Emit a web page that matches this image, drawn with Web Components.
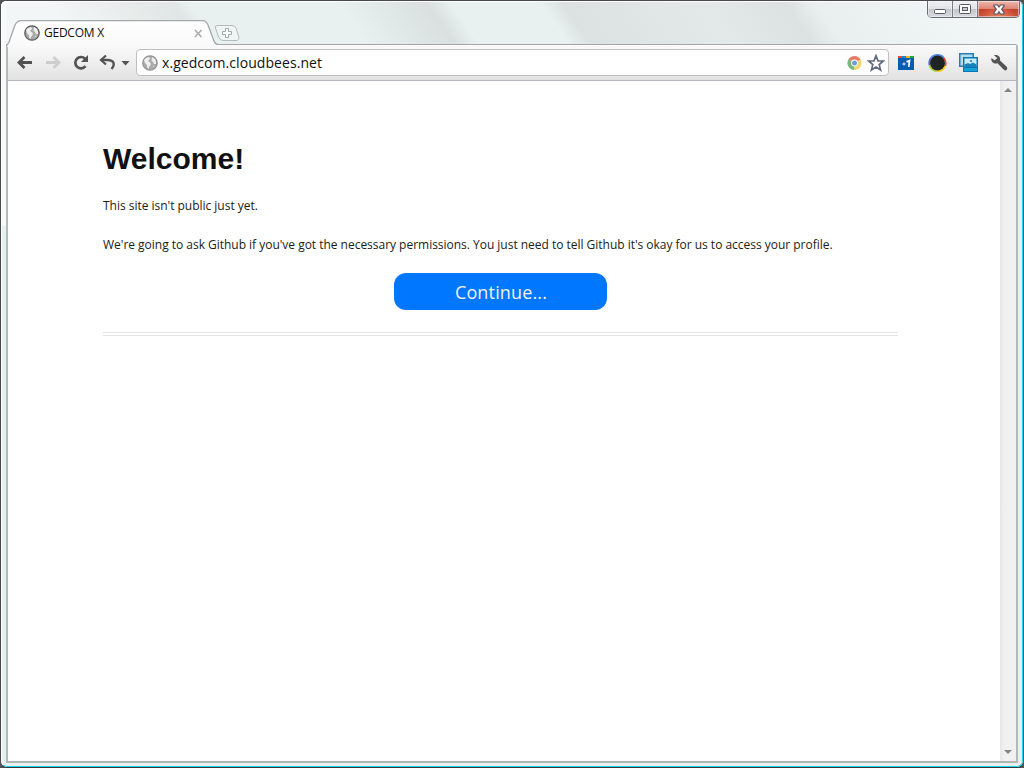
<!DOCTYPE html>
<html lang="en">
<meta charset="UTF-8">
<title>GEDCOM X</title>
<style>
  html, body {
    margin: 0;
    height: 100%;
    overflow: hidden;
    background: #515356;
  }
  body {
    font-family: "Open Sans", "Noto Sans", sans-serif;
  }
</style>

<template id="window-template">
  <style>
    :host {
      display: flex;
      flex-direction: column;
      box-sizing: border-box;
      width: 1024px;
      height: 768px;
      border: 1px solid #48494c;
      border-bottom-color: #35393b;
      border-radius: 6px 6px 7px 7px;
      background: #eef3f3;
      overflow: hidden;
    }
    .glass {
      display: flex;
      flex-direction: column;
      flex: 1;
      box-sizing: border-box;
      border: 1px solid #fcfefe;
      border-right: 1px solid #18d4ed;
      border-bottom: 1px solid #18d4ed;
      border-radius: 5px 5px 6px 6px;
      padding: 0 4px 3px 4px;
      background:
        linear-gradient(#f8faf9 0 223px, transparent 224px) 0 0 / 5px 100% no-repeat,
        linear-gradient(55.7deg, #f3f6f6 0 100px, #e0e6e5 202px, #e9f0f0 216px, #e8f1f0 340px, #d9e0df 412px, #e8f1f0 432px, #e8f1f0 507px, #dbe2e1 525px, #e3e9e8 640px, #dbe2e1 708px, #e9efef 732px, #f3f7f7 880px) 0 0 / 1020px 110px no-repeat,
        #e9f0f0;
    }
    .top {
      display: flex;
      justify-content: space-between;
      height: 42px;
    }
    .frame {
      flex: 1;
      display: flex;
      flex-direction: column;
      min-height: 0;
      border: 1px solid #a0a5a5;
      border-width: 0 2px 2px;
      border-right-color: #b3b8b8;
      border-bottom-color: #b0b5b5;
      border-left-color: #b3b8b8;
      border-radius: 0 3px 0 0;
      background: #fff;
    }
  </style>
  <div class="glass">
    <div class="top"><slot name="tabs"></slot><slot name="controls"></slot></div>
    <div class="frame"><slot></slot></div>
  </div>
</template>

<template id="tab-template">
  <style>
    :host { display: flex; align-items: flex-end; position: relative; z-index: 1; }
    .tab {
      position: relative;
      width: 210px;
      height: 26px;
      margin-bottom: -2px;
      display: flex;
      align-items: center;
    }
    .shape { position: absolute; left: 0; top: 0; }
    .content {
      position: relative;
      display: flex;
      align-items: center;
      flex: 1;
      padding: 0 13px 0 18px;
    }
    .title { flex: 1; margin-left: 4px; font-size: 12px; line-height: 18px; letter-spacing: -.25px; color: #111; }
    .add { margin: 0 0 1px -3px; }
    svg { display: block; }
  </style>
  <div class="tab">
    <svg class="shape" width="212" height="27">
      <defs><linearGradient id="g" x2="0" y2="1"><stop stop-color="#fff"/><stop offset="1" stop-color="#f9f9f9"/></linearGradient></defs>
      <path d="M1 27V26C1 25 2 24 3 22L9 5Q11 1 15 1H197Q200 1 202 5L208 21Q209 24 212 24.500V27Z" fill="url(#g)"/>
      <path d="M.5 27V26C1 25 2 24 3 22L9 5Q11 .7 15 .7H197Q200 .7 202 5L208 21Q209 24 212 24.500" fill="none" stroke="#a2a7a7" stroke-width="1.300"/>
    </svg>
    <div class="content">
      <globe-icon></globe-icon>
      <span class="title"><slot></slot></span>
      <svg width="9" height="9"><path d="M1 1l6.500 7M7.500 1L1 8" stroke="#a9a9a9" stroke-width="1.500"/></svg>
    </div>
  </div>
  <svg class="add" width="28" height="19">
    <path d="M4 1.500H19Q22 1.500 23 4L25.800 13Q26.500 16.500 23 16.500H10Q7 16.500 5.500 13L2.500 4Q1.500 1.500 4 1.500Z" fill="#f4f8f7" fill-opacity=".55" stroke="#b4bcbb"/>
    <path d="M12.500 4.500h3v3h3v3h-3v3h-3v-3h-3v-3h3z" fill="#fff" stroke="#a3a9a9"/>
  </svg>
</template>

<template id="controls-template">
  <style>
    :host { display: flex; align-items: flex-start; margin-right: -2px; }
    .buttons {
      display: flex;
      height: 16px;
      margin-top: -1px;
      border: 1px solid #666c70;
      border-top: 0;
      border-radius: 0 0 5px 5px;
      overflow: hidden;
      box-shadow: 0 0 1px #fff;
    }
    span {
      display: flex;
      justify-content: center;
      align-items: center;
      width: 24px;
      background: linear-gradient(#eff1f3, #e1e3e5 47%, #c3c6cc 50%, #d7dade);
      border-right: 1px solid #777c81;
      box-shadow: inset 0 0 0 1px #f4f6f788;
    }
    .close {
      width: 41px;
      border: 0;
      background: radial-gradient(ellipse at 50% 110%, #eb8562, transparent 60%), linear-gradient(#efb9ae, #dc8777 47%, #c4412a 50%, #cd5640);
    }
  </style>
  <div class="buttons">
    <span><svg width="14" height="14"><rect x="1.500" y="7.500" width="11" height="4" rx="1" fill="#fff" stroke="#555b66"/></svg></span>
    <span><svg width="14" height="14"><rect x="1.500" y="2.500" width="11" height="9" rx="1" fill="#fff" stroke="#555b66"/><rect x="4.500" y="5.500" width="5" height="3" fill="#c8ccd2" stroke="#555b66"/></svg></span>
    <span class="close"><svg width="14" height="13"><path d="M2 2h3.500L7 4 8.500 2H12v1.200L9.700 6.300 12 9.500V11H8.500L7 8.800 5.500 11H2V9.500L4.300 6.300 2 3.200z" fill="#fff" stroke="#5c5560" stroke-width="1.200"/></svg></span>
  </div>
</template>

<template id="globe-template">
  <style>:host { display: block; flex: none; width: 16px; height: 16px; color: #5c5c5c; } svg { display: block; }</style>
  <svg width="16" height="16" viewBox="0 0 16 16">
    <circle cx="8" cy="8" r="7.200" fill="#aaa" stroke="currentColor" stroke-width="1.300"/>
    <path d="M2 5L4 3 7 2 8 3.500 7 5 6 6 8 7.500 9 9 8 10.500 7 12 6.500 14 5 12 5 10 3 8ZM10 2L13 4 14 6.500 14 9 12 9 11 7 9.500 5.500ZM11 11l1.500-.5-.5 1.500z" fill="#efefef"/>
  </svg>
</template>

<template id="toolbar-template">
  <style>
    :host {
      display: flex;
      align-items: center;
      box-sizing: border-box;
      height: 37px;
      padding: 0 7px 0 8px;
      border-top: 1px solid #a2a7a7;
      border-bottom: 1px solid #b5b6c2;
      background: linear-gradient(#fafafa, #e2e2e2);
    }
    svg { display: block; flex: none; }
    .address {
      display: flex;
      align-items: center;
      flex: 1;
      box-sizing: border-box;
      height: 27px;
      margin: 0 7px 0 0;
      padding: 0 3px 0 5px;
      border: 1px solid #bfbfc1;
      border-radius: 4px;
      background: #fff;
    }
    .url { flex: 1; margin-left: 4px; font-size: 14px; line-height: 20px; letter-spacing: .06px; color: #111; }
    .address globe-icon { color: #949494; }
    .ext { display: flex; gap: 11px; align-items: center; }
  </style>
  <svg width="120" height="24" viewBox="0 0 120 24" fill="none">
    <path d="M8.500 6L3 11.500 8.500 17M3.500 11.500H16" stroke="#525252" stroke-width="2.800"/>
    <path d="M37.500 6L43 11.500 37.500 17M42.500 11.500H30" stroke="#cecece" stroke-width="2.800"/>
    <path d="M69.500 15.200A5.700 5.700 0 1 1 69 7.600" stroke="#525252" stroke-width="2.700"/>
    <path d="M72 4v7h-7z" fill="#525252"/>
    <path d="M90 4.500L85 9l5 4.500" stroke="#525252" stroke-width="2.200"/>
    <path d="M85.500 9h6c6.500 0 8 4.500 4 9" stroke="#525252" stroke-width="2.400"/>
    <path d="M105.500 10h8l-4 4.500z" fill="#525252"/>
  </svg>
  <div class="address">
    <globe-icon></globe-icon>
    <span class="url"><slot></slot></span>
    <svg width="15" height="16" viewBox="0 0 15 16">
      <path d="M7.500 8L1.400 4.500A7 7 0 0 1 13.600 4.500Z" fill="#e67a69"/>
      <path d="M7.500 8L1.400 4.500A7 7 0 0 0 7.500 15Z" fill="#78b779"/>
      <path d="M7.500 8L13.600 4.500A7 7 0 0 1 7.500 15Z" fill="#f1d869"/>
      <circle cx="7.500" cy="8" r="3.400" fill="#fff"/><circle cx="7.500" cy="8" r="2.500" fill="#6c9fd5"/>
    </svg>
    <svg width="18" height="18" viewBox="0 0 18 18" style="margin-left: 5px"><path d="M9 1.700L11 6.800 16.300 7 12.200 10.600 13.600 16 9 13 4.400 16 5.800 10.600 1.700 7 7 6.800Z" fill="#fff" stroke="#606b82" stroke-width="1.700"/></svg>
  </div>
  <div class="ext">
    <svg width="20" height="20" viewBox="0 0 20 20">
      <rect x="2" y="3" width="16" height="14" fill="#075cae"/><path d="M2 3h4v2H2z" fill="#e44c39"/><path d="M6 3h4v2H6z" fill="#1686db"/><path d="M10 3h4v2h-4z" fill="#f1b81c"/><path d="M14 3h4v2h-4z" fill="#22a34a"/>
      <path d="M6.300 11h3.400M8 9.500v3" stroke="#d5e5f5" stroke-width="1.200"/><path d="M10.500 8.900l3-1.200-.8 6.300" fill="none" stroke="#fff" stroke-width="1.700"/>
    </svg>
    <svg width="20" height="20" viewBox="-.5 0 20 20" fill="none" stroke-width="2">
      <path d="M3.700 5A8.200 8.200 0 0 1 16.300 5" stroke="#5186e6"/><path d="M16.300 5A8.200 8.200 0 0 1 17.500 13" stroke="#e24d3c"/><path d="M17.500 13A8.200 8.200 0 0 1 9 18" stroke="#f5cf18"/><path d="M9 18A8.200 8.200 0 0 1 2 12" stroke="#a5cf38"/><path d="M2 12A8.200 8.200 0 0 1 3.700 5" stroke="#626bd5"/>
      <circle cx="10" cy="10" r="7.500" fill="#202324"/>
    </svg>
    <svg width="20" height="20" viewBox="0 0 20 20">
      <path d="M1 0h15v14H1z" fill="#247eb4"/><path d="M2.500 1.500h12v11h-12z" fill="#b5dced"/>
      <path d="M5 4h15v15H5z" fill="#0878b9"/><path d="M6.500 5.500h12v8h-12z" fill="#caecf8"/><path d="M6.500 11.500l3.500-1.500 2 1 3-1.500 3.500 2v2.500h-12z" fill="#1b82b8"/><circle cx="13" cy="8" r="1" fill="#1778ad"/><path d="M6 15h13v3H6z" fill="#18a1d6"/>
    </svg>
    <svg width="20" height="20" viewBox="-.5 0 20 20"><path d="M4.500 2.500C8 1 11.500 4 10.500 7.500L17.500 14Q18.500 16 16.500 17.500 15 17.500 14 16.500L8 10.200C4 11.500 1 8.500 2 5L5 7.200 7.500 5.500 7 4.200Z" fill="#555"/></svg>
  </div>
</template>

<template id="scrollbar-template">
  <style>
    :host {
      display: flex;
      flex-direction: column;
      justify-content: space-between;
      align-items: center;
      box-sizing: border-box;
      width: 16px;
      padding: 7px 0;
      background: linear-gradient(90deg, #e6e6e6, #f0f0f0 4px, #f1f1f1);
    }
  </style>
  <svg width="8" height="4"><path d="M0 4l4-4 4 4z" fill="#858585"/></svg>
  <svg width="8" height="4"><path d="M0 0l4 4 4-4z" fill="#858585"/></svg>
</template>

<template id="welcome-template">
  <style>
    :host { display: block; flex: 1; padding: 58px 102px 0 95px; color: #1c1c14; font-size: 12px; }
    h1 { margin: 0; font: bold 30px/40px "Liberation Sans", Arial, sans-serif; color: #111; }
    ::slotted(p) { margin: 0; line-height: 18px; white-space: nowrap; letter-spacing: -.02px; }
    .text { display: flex; flex-direction: column; gap: 21px; margin-top: 18px; }
    button {
      display: block;
      width: 213px;
      height: 37px;
      margin: 19px auto 22px;
      padding: 1px 0 0 1px;
      border: 0;
      border-radius: 12px;
      background: #0077ff;
      color: #f2f2f2;
      font: 18px/36px "Open Sans", sans-serif;
      letter-spacing: .15px;
    }
    hr { margin: 0; height: 2px; border: solid #e3e3e3; border-width: 1px 0; }
  </style>
  <h1><slot name="heading"></slot></h1>
  <div class="text"><slot></slot></div>
  <button><slot name="action"></slot></button>
  <hr>
</template>

<style>
  .view { display: flex; flex: 1; min-height: 0; background: #fff; }
</style>

<browser-window>
  <browser-tab slot="tabs">GEDCOM X</browser-tab>
  <window-controls slot="controls"></window-controls>
  <browser-toolbar>x.gedcom.cloudbees.net</browser-toolbar>
  <div class="view">
    <welcome-page>
      <span slot="heading">Welcome!</span>
      <p>This site isn't public just yet.</p>
      <p>We're going to ask Github if you've got the necessary permissions. You just need to tell Github it's okay for us to access your profile.</p>
      <span slot="action">Continue...</span>
    </welcome-page>
    <scroll-bar></scroll-bar>
  </div>
</browser-window>

<script>
  class TemplateElement extends HTMLElement {
    constructor() {
      super();
      const template = document.getElementById(this.constructor.template);
      this.attachShadow({ mode: 'open' }).appendChild(document.importNode(template.content, true));
    }
  }

  class BrowserWindow extends TemplateElement {
    static get template() { return 'window-template'; }
  }
  class BrowserTab extends TemplateElement {
    static get template() { return 'tab-template'; }
  }
  class WindowControls extends TemplateElement {
    static get template() { return 'controls-template'; }
  }
  class GlobeIcon extends TemplateElement {
    static get template() { return 'globe-template'; }
  }
  class BrowserToolbar extends TemplateElement {
    static get template() { return 'toolbar-template'; }
  }
  class ScrollBar extends TemplateElement {
    static get template() { return 'scrollbar-template'; }
  }
  class WelcomePage extends TemplateElement {
    static get template() { return 'welcome-template'; }
  }

  window.customElements.define('globe-icon', GlobeIcon);
  window.customElements.define('browser-window', BrowserWindow);
  window.customElements.define('browser-tab', BrowserTab);
  window.customElements.define('window-controls', WindowControls);
  window.customElements.define('browser-toolbar', BrowserToolbar);
  window.customElements.define('scroll-bar', ScrollBar);
  window.customElements.define('welcome-page', WelcomePage);
</script>

</html>
